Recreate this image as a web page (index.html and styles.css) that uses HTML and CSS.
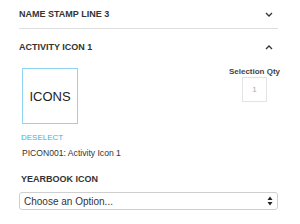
FILE: index.html
```html
<!DOCTYPE html>
<html>
<head>
<meta charset="utf-8">
<link rel="stylesheet" href="styles.css">
</head>
<body>
<div class="panel">
  <div class="header first">
    <span class="title">NAME STAMP LINE 3</span>
    <svg class="chev" width="8" height="5" viewBox="0 0 8 5"><polyline points="1,1 4,4 7,1" fill="none" stroke="#333" stroke-width="1.3"/></svg>
  </div>
  <div class="header second">
    <span class="title">ACTIVITY ICON 1</span>
    <svg class="chev" width="8" height="5" viewBox="0 0 8 5"><polyline points="1,4 4,1 7,4" fill="none" stroke="#333" stroke-width="1.3"/></svg>
  </div>
  <div class="content">
    <div class="icon-col">
      <div class="icon-box">ICONS</div>
    </div>
    <div class="qty-col">
      <div class="qty-label">Selection Qty</div>
      <div class="qty-box">1</div>
    </div>
  </div>
  <div class="deselect">DESELECT</div>
  <div class="item">PICON001: Activity Icon 1</div>
  <div class="title yb">YEARBOOK ICON</div>
  <div class="select">
    <span>Choose an Option...</span>
    <svg width="6" height="10" viewBox="0 0 6 10"><polygon points="3,0.5 5.5,4 0.5,4" fill="#222"/><polygon points="3,9.5 5.5,6 0.5,6" fill="#222"/></svg>
  </div>
</div>
</body>
</html>
```
FILE: styles.css
```css
html, body {
  margin: 0;
  padding: 0;
  background: #fff;
}
body {
  font-family: "Liberation Sans", Arial, sans-serif;
  color: #333;
}
.panel {
  width: 259px;
  padding: 0 22px 0 19px;
}
.header {
  height: 28px;
  display: flex;
  align-items: center;
  justify-content: space-between;
}
.header.first {
  border-bottom: 1px solid #dedede;
}
.header.second {
  margin-top: 4px;
}
.title {
  font-size: 9px;
  font-weight: bold;
  color: #333;
}
.chev {
  margin-right: 5px;
  display: block;
}
.content {
  display: flex;
  justify-content: space-between;
  margin-top: 7px;
}
.icon-col {
  padding-left: 3px;
}
.icon-box {
  width: 54px;
  height: 54px;
  border: 1px solid #8fd4f2;
  display: flex;
  align-items: center;
  justify-content: center;
  font-size: 13px;
  color: #222;
}
.qty-col {
  display: flex;
  flex-direction: column;
  align-items: center;
  width: 47px;
  margin-top: -1px;
}
.qty-label {
  font-size: 8px;
  font-weight: bold;
  color: #444;
  line-height: 10px;
  white-space: nowrap;
}
.qty-box {
  width: 23px;
  height: 23px;
  border: 1px solid #e3e3e3;
  display: flex;
  align-items: center;
  justify-content: center;
  font-size: 8px;
  color: #aaa;
}
.deselect {
  margin-top: 9px;
  padding-left: 2px;
  font-size: 8px;
  line-height: 10px;
  color: #40b0e6;
}
.item {
  margin-top: 4px;
  padding-left: 3px;
  font-size: 8.6px;
  line-height: 12px;
  color: #333;
}
.yb {
  margin-top: 14px;
  padding-left: 2px;
  line-height: 12px;
}
.select {
  margin-top: 7px;
  height: 16px;
  border: 1px solid #cfcfcf;
  border-radius: 3px;
  display: flex;
  align-items: center;
  justify-content: space-between;
  padding: 0 4px 0 4px;
  font-size: 10px;
  color: #333;
}
```
